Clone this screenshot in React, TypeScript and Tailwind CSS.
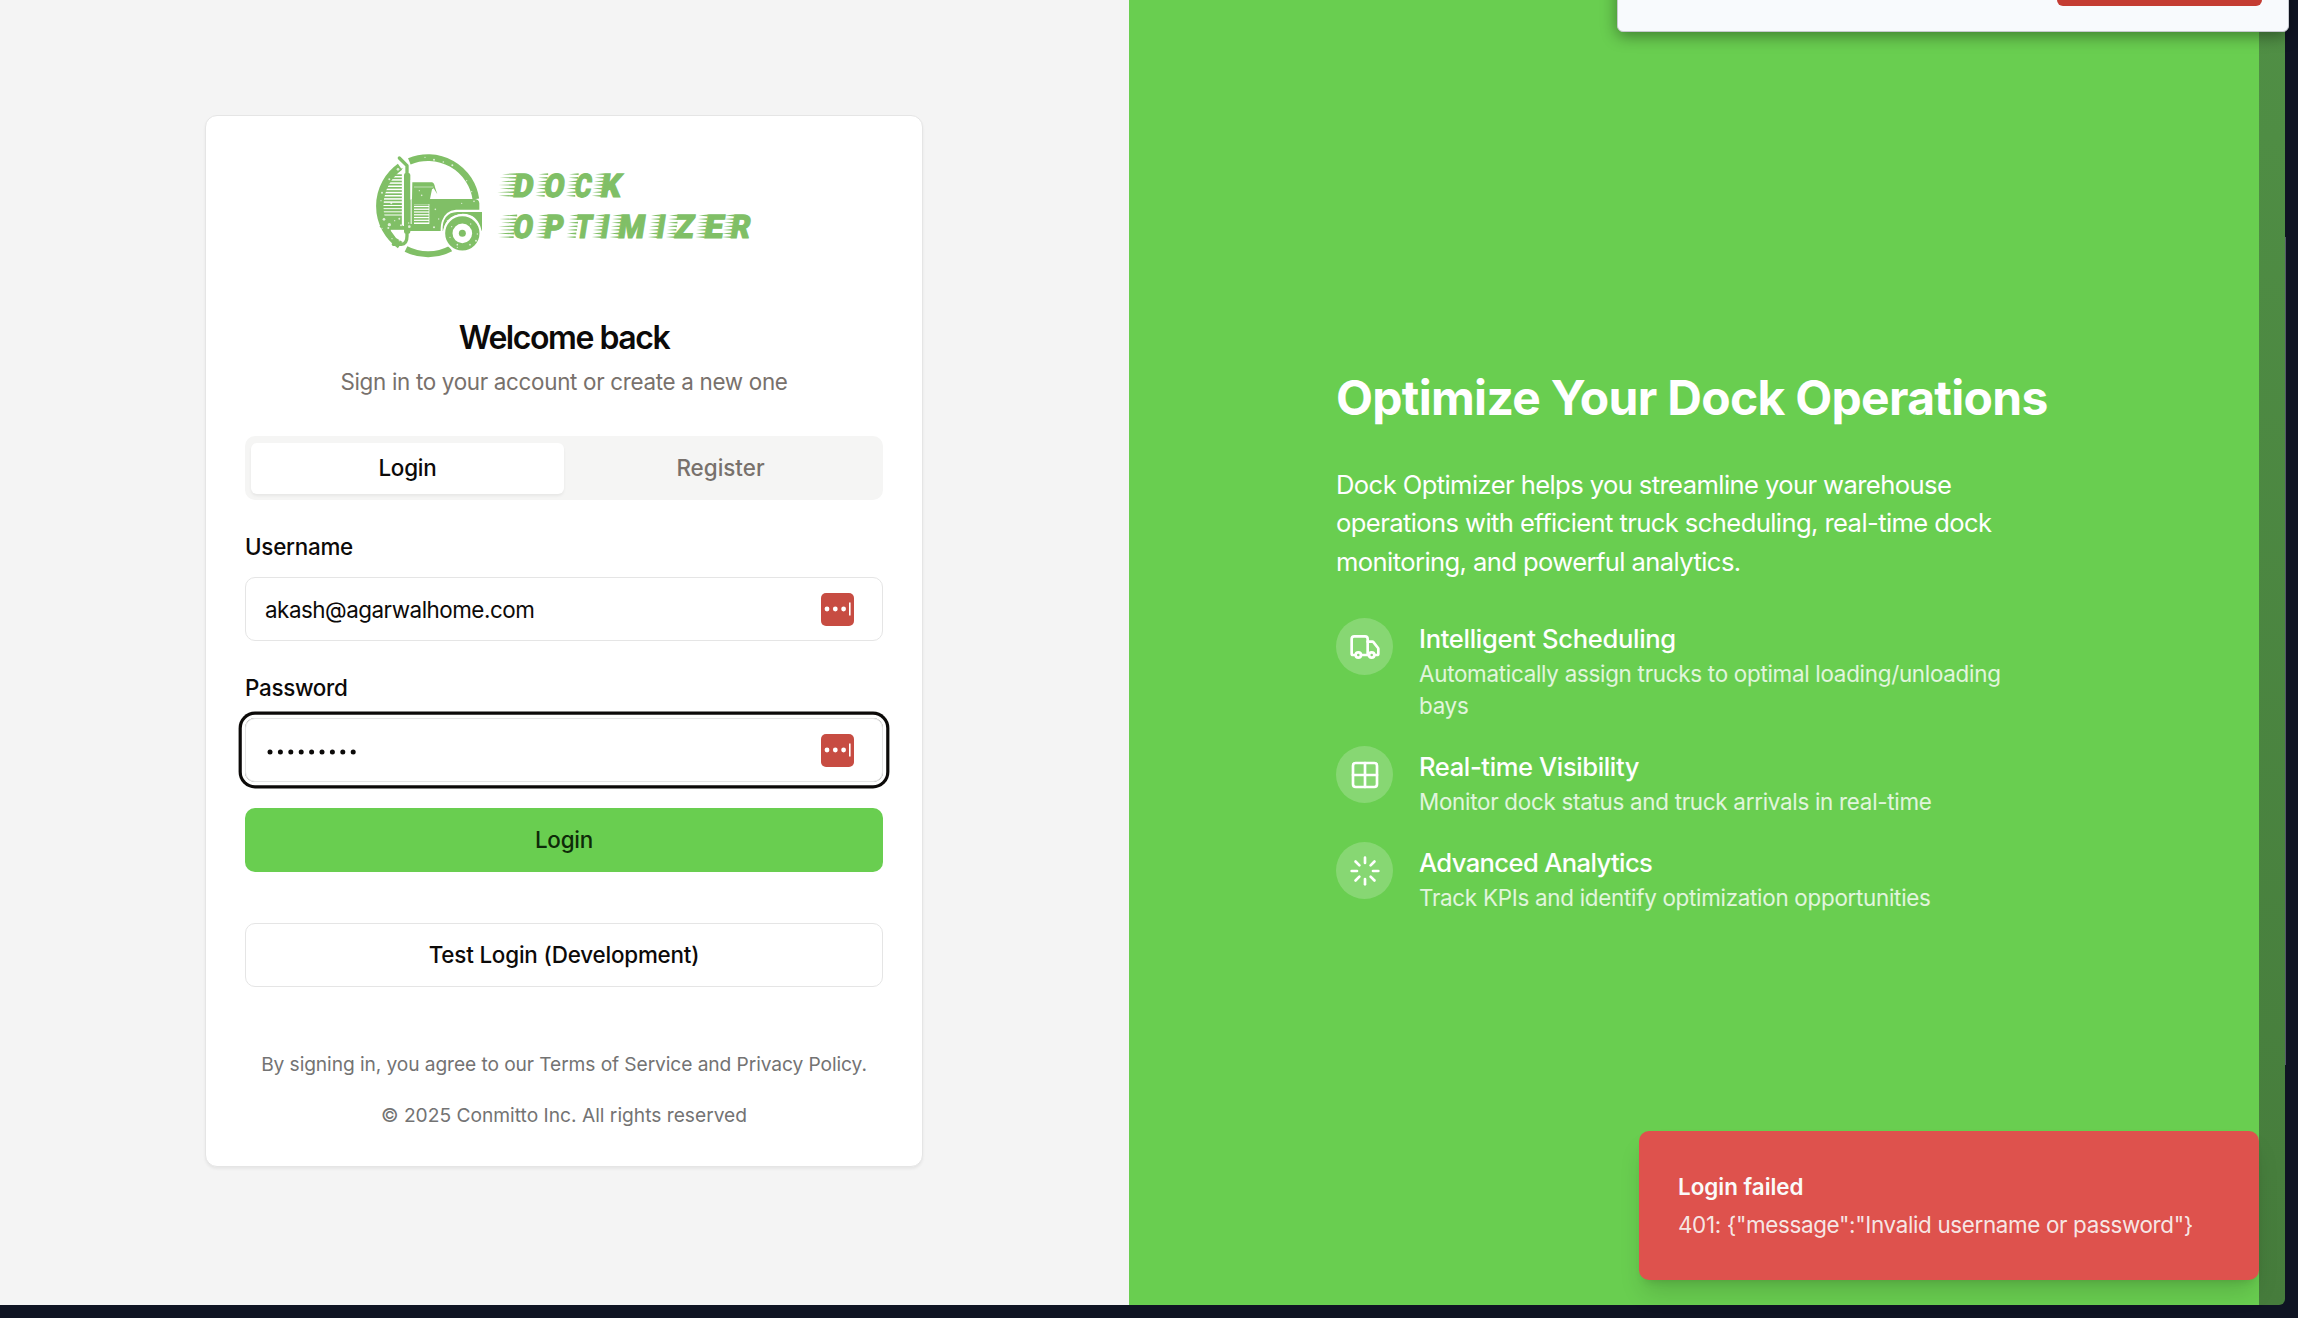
import React from "react";
import { Truck, Grid2x2, Loader } from "lucide-react";

const G = "#80bf66";

const speckles = [
  [165, 22, 2], [192, 29, 3], [220, 36, 2.500], [247, 46, 3], [290, 92, 2], [305, 125, 2], [36, 128, 3], [33, 152, 2], [58, 88, 3], [84, 58, 4],
  [42, 208, 4], [58, 224, 5], [55, 234, 3], [88, 206, 3], [93, 226, 3], [74, 212, 2], [118, 230, 4], [116, 219, 2], [36, 235, 2], [64, 160, 3],
  [148, 122, 2], [155, 136, 2.500], [196, 178, 2.500], [192, 232, 3], [206, 207, 2], [275, 160, 2], [312, 154, 2.500], [66, 266, 2], [80, 250, 3],
  [318, 272, 3], [322, 252, 2], [300, 284, 2.500], [262, 284, 2.500], [240, 262, 2], [245, 230, 2], [262, 292, 2], [88, 272, 2], [302, 222, 2], [232, 212, 2],
];

const grilleStarts = [62, 56, 52, 54, 44, 42, 40, 38, 38, 36, 38, 36, 38, 40];

function TruckLogo() {
  return (
    <svg viewBox="0 0 360 336" className="h-[112px] w-[120px] shrink-0" aria-hidden="true">
      <g fill="none" stroke={G}>
        <path d="M118 34A145 145 0 0 1 317.500 147" strokeWidth="20" />
        <path d="M90 50A145 145 0 0 0 90 286" strokeWidth="22" />
        <path d="M108 297A145 145 0 0 0 242 296" strokeWidth="18" />
      </g>
      <path d="M100 54Q62 78 48 120Q30 170 46 215L30 215V120L70 62Z" fill={G} />
      {grilleStarts.map((x, i) => (
        <rect key={i} x={x} y={73 + i * 9.500} width={98 - x} height={i > 8 ? 6.500 : 5} fill={G} />
      ))}
      <path d="M36 199H98V228H121V238H103L97 262L86 284L60 262L30 220Z" fill={G} />
      <path d="M62 238H103V256L96 280H88L62 246Z" fill="white" />
      <path d="M28 228H102V239H60L78 264L98 276L84 286L54 262Z" fill={G} />
      <path d="M98 60V226" stroke="white" strokeWidth="5" />
      <path d="M88 24L111 47V258Q111 282 94 283H70" fill="none" stroke={G} strokeWidth="10" strokeLinecap="round" strokeLinejoin="round" />
      <rect x="102" y="69" width="19" height="182" rx="6" fill={G} />
      <path d="M127 97H186Q193 98 195 112L202 133L191 115L186 118L180 147H315Q327 148 328 160V179H258Q226 182 216 212Q212 222 212 243H118V150L126 147Z" fill={G} />
      <path d="M218 243C216 206 232 187 262 186H336V242H331Q326 192 278 191Q226 196 220 243Z" fill={G} />
      <path d="M132 111H190" stroke="#bfdfb2" strokeWidth="3" />
      <path d="M123.500 90V222" stroke="white" strokeWidth="3" />
      <rect x="132" y="162" width="46" height="60" fill="white" />
      {[0, 1, 2, 3, 4, 5, 6].map((i) => (
        <rect key={i} x="132" y={163 + i * 8.300} width="44" height="4.600" fill={G} />
      ))}
      <circle cx="277" cy="250" r="58" fill="white" />
      <circle cx="277" cy="250" r="40.500" fill="none" stroke={G} strokeWidth="22" />
      <circle cx="277" cy="250" r="10.500" fill={G} />
      <g fill="white" opacity=".75">
        {speckles.map(([x, y, r]) => <circle key={`${x}-${y}`} cx={x} cy={y} r={r} />)}
      </g>
    </svg>
  );
}

// Each glyph: character, left edge, upright width, baseline
const glyphs: [string, number, number, number][] = [
  ["D", 512, 20, 197], ["O", 543, 20, 197], ["C", 573.500, 16.500, 197], ["K", 599.500, 20, 197],
  ["O", 512, 19.500, 238.300], ["P", 543, 19, 238.300], ["T", 574, 16.500, 238.300], ["I", 599.500, 8, 238.300], ["M", 617, 26.500, 238.300],
  ["I", 655.500, 8, 238.300], ["Z", 673.500, 19, 238.300], ["E", 703, 19, 238.300], ["R", 729.500, 19.500, 238.300],
];

function Wordmark() {
  return (
    <svg viewBox="490 165 270 80" className="mt-[15px] h-20 w-[270px] shrink-0" role="img" aria-label="Dock Optimizer">
      {glyphs.map(([ch, x, w, base], i) => (
        <g key={i}>
          {[0, 1, 2, 3, 4, 5, 6].map((r) => {
            const y = base - 22.800 + r * 3.600;
            const end = x + 1.500 + (base - y) * 0.16;
            const len = x < 513 ? 15 + (r % 2) * 2 : 9.500;
            return <path key={r} d={`M${end - len} ${y}L${end} ${y - 0.9}V${y + 0.9}Z`} fill={G} />;
          })}
          <g transform={`translate(${x} ${base}) skewX(-9)`}>
            <text x="0" y="-0.3" textLength={w} lengthAdjust="spacingAndGlyphs" fill={G} stroke={G} strokeWidth="1.200" fontFamily="Roboto" fontWeight="900" fontSize="32.500">{ch}</text>
          </g>
        </g>
      ))}
    </svg>
  );
}

function PasswordManagerIcon() {
  return (
    <span className="flex h-[33px] w-[33px] items-center rounded-[5px] bg-[#c74c42] pl-[3px]">
      <svg viewBox="0 0 28 20" className="h-5 w-7" fill="white">
        <circle cx="3" cy="10" r="2.400" />
        <circle cx="11.300" cy="10" r="2.400" />
        <circle cx="19.600" cy="10" r="2.400" />
        <rect x="25" y="3.500" width="1.600" height="13" />
      </svg>
    </span>
  );
}

const features = [
  { Icon: Truck, title: "Intelligent Scheduling", tracking: "tracking-[-0.33px]", text: "Automatically assign trucks to optimal loading/unloading bays" },
  { Icon: Grid2x2, title: "Real-time Visibility", tracking: "tracking-[-0.4px]", text: "Monitor dock status and truck arrivals in real-time" },
  { Icon: Loader, title: "Advanced Analytics", tracking: "tracking-[-0.62px]", text: "Track KPIs and identify optimization opportunities" },
];

export default function App() {
  return (
    <div className="relative h-[1318px] w-[2298px] overflow-hidden bg-[#0f1423] font-['Inter',sans-serif] text-[22.4px] leading-8 text-[#0c0a09]">
      <div className="flex h-[1305px] w-[2285px] overflow-hidden rounded-br-[6px]">
        <main className="w-[1129px] shrink-0 bg-[#f4f4f4] pt-[115px] pl-[205px]">
          <section className="flex h-[1052px] w-[718px] flex-col items-stretch rounded-[12px] border border-[#e5e5e5] bg-white px-[39px] shadow-[0_2px_3px_rgba(0,0,0,0.06)]">
            <div className="flex h-[180px] items-start pt-[34px] pl-[125px]">
              <TruckLogo />
              <Wordmark />
            </div>
            <h1 className="mt-[26px] text-center text-[32px] leading-8 font-semibold tracking-[-1.45px]">Welcome back</h1>
            <p className="mt-3 text-center tracking-[-0.31px] text-[#78716c]">Sign in to your account or create a new one</p>
            <div className="mt-[38px] grid h-16 shrink-0 grid-cols-2 rounded-[10px] bg-[#f5f5f4] px-[6px] py-[6.500px] text-center font-medium">
              <button className="rounded-[6px] bg-white tracking-[-0.2px] shadow-[0_2px_3px_rgba(0,0,0,0.06)]">Login</button>
              <button className="text-[#78716c]">Register</button>
            </div>
            <label className="mt-[31px] font-medium tracking-[-0.25px]">Username</label>
            <div className="mt-[14px] flex h-16 shrink-0 items-center justify-between rounded-[10px] border border-[#e5e5e5] pr-7 pl-[19px]">
              <span className="pt-0.5 tracking-[-0.49px]">akash@agarwalhome.com</span>
              <PasswordManagerIcon />
            </div>
            <label className="mt-[31px] font-medium tracking-[-0.3px]">Password</label>
            <div className="mt-[14px] flex h-16 shrink-0 items-center justify-between rounded-[10px] border border-[#e5e5e5] pr-7 pl-[20px] shadow-[0_0_0_3.2px_white,0_0_0_6.4px_#0c0a09]">
              <svg viewBox="0 0 96 10" className="mt-[3px] h-[10px] w-24" fill="#0c0a09">
                {Array.from({ length: 9 }, (_, i) => <circle key={i} cx={4 + i * 10.400} cy="5" r="2.500" />)}
              </svg>
              <PasswordManagerIcon />
            </div>
            <button className="mt-[26px] h-16 shrink-0 rounded-[10px] bg-[#69ce50] font-medium tracking-[-0.2px] text-[#0e2a08]">Login</button>
            <button className="mt-[51px] h-16 shrink-0 rounded-[10px] border border-[#e5e5e5] font-medium tracking-[-0.18px]">Test Login (Development)</button>
            <p className="mt-[64px] text-center text-[19.2px] leading-[26px] tracking-[-0.09px] whitespace-nowrap text-[#737373]">By signing in, you agree to our Terms of Service and Privacy Policy.</p>
            <p className="mt-[25px] text-center text-[19.2px] leading-[26px] text-[#737373]">© 2025 Conmitto Inc. All rights reserved</p>
          </section>
        </main>
        <aside className="w-[1130px] shrink-0 bg-[#69ce50] pt-[369px] pl-[207px] text-white">
          <div className="w-[716px]">
            <h2 className="text-[48px] leading-[58px] font-bold tracking-[-0.71px] whitespace-nowrap">Optimize Your Dock Operations</h2>
            <p className="mt-[39px] w-[680px] text-[25.6px] leading-[38.4px] tracking-[-0.6px]">Dock Optimizer helps you streamline your warehouse operations with efficient truck scheduling, real-time dock monitoring, and powerful analytics.</p>
            <ul className="mt-[37px] flex flex-col gap-6">
              {features.map(({ Icon, title, tracking, text }) => (
                <li key={title} className="flex items-start gap-[26px]">
                  <span className="flex size-[57px] shrink-0 items-center justify-center rounded-full bg-white/20">
                    <Icon className="size-8" strokeWidth={2} />
                  </span>
                  <div className="pt-[1.600px]">
                    <h3 className={`text-[25.6px] leading-[38.4px] font-medium ${tracking}`}>{title}</h3>
                    <p className="w-[600px] tracking-[-0.28px] text-white/80">{text}</p>
                  </div>
                </li>
              ))}
            </ul>
          </div>
        </aside>
        <div className="flex-1 bg-[linear-gradient(#508f45,#467c3c)]" />
      </div>
      <div className="absolute top-[237px] left-[2285px] h-[828px] w-px bg-[#55586a]" />
      <div className="absolute -top-10 left-[1617px] h-[72px] w-[672px] rounded-[6px] border border-[#c8cad0] bg-[#f8fafd] shadow-[0_4px_16px_rgba(0,0,0,0.4)]">
        <div className="mt-[5px] ml-[439px] h-10 w-[205px] rounded-[6px] bg-[#c43c33]" />
      </div>
      <div role="alert" className="absolute top-[1131px] left-[1639px] h-[149px] w-[620px] rounded-[10px] bg-[#de524d] pt-[40px] pl-[39px] shadow-[0_16px_24px_-5px_rgba(0,0,0,0.15),0_6px_10px_-6px_rgba(0,0,0,0.15)]">
        <div className="font-semibold text-[#fafaf9]">Login failed</div>
        <div className="mt-[6px] tracking-[-0.34px] text-[#fafaf9]/90">401: {'{"message":"Invalid username or password"}'}</div>
      </div>
    </div>
  );
}
